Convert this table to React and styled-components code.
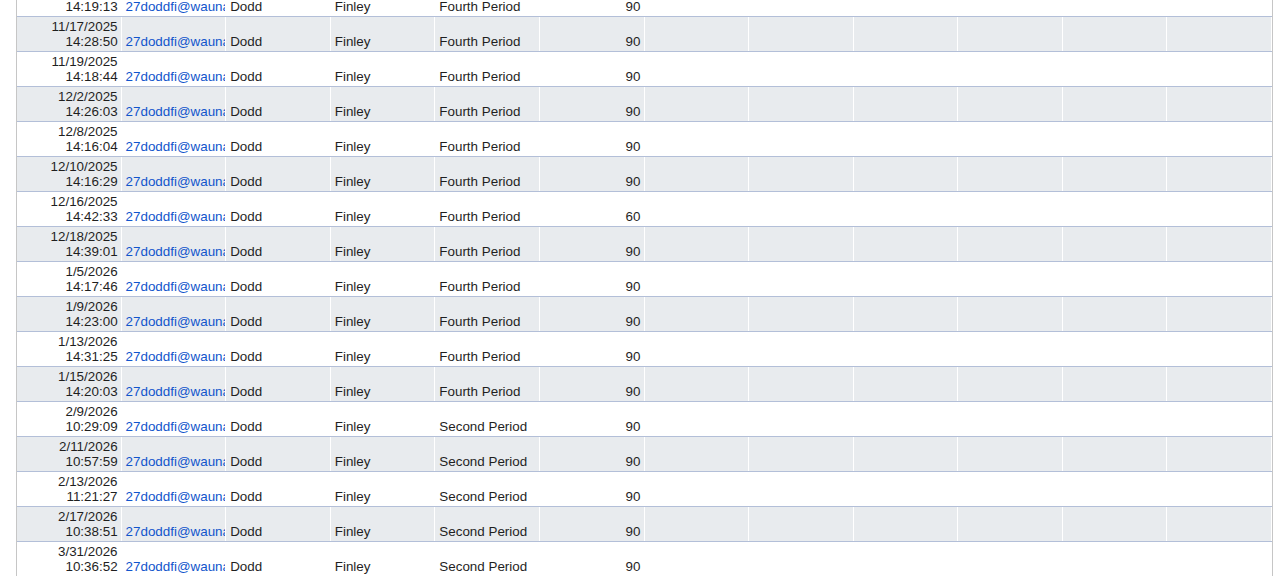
import styled, { createGlobalStyle } from 'styled-components';

const GlobalStyle = createGlobalStyle`
  body {
    margin: 0;
    background: #ffffff;
    font-family: "Liberation Sans", Arial, sans-serif;
    overflow: hidden;
  }
`;

const Page = styled.div`
  height: 576px;
  overflow: hidden;
`;

const Sheet = styled.div`
  margin-left: 16px;
  margin-top: -18px;
  width: 1255px;
  border-left: 1px solid #c6c6c6;
  border-right: 1px solid #c6c6c6;
  min-height: 620px;
`;

const Row = styled.div`
  display: grid;
  grid-template-columns: repeat(12, 1fr);
  height: 35px;
  box-sizing: border-box;
  border-bottom: 1px solid #b3bfd8;
  background: ${p => (p.$alt ? '#e8ebee' : '#ffffff')};
`;

const Cell = styled.div`
  display: flex;
  flex-direction: column;
  justify-content: flex-end;
  align-items: ${p => (p.$right ? 'flex-end' : 'flex-start')};
  padding: 0 3px 2px 4px;
  border-right: 1px solid #ffffff;
  overflow: hidden;
  white-space: nowrap;
  font-size: 13.4px;
  line-height: 15px;
  color: ${p => (p.$link ? '#1155cc' : '#1f1f1f')};
`;

const rows = [
  ['11/13/2025', '14:19:13', 'Fourth Period', '90'],
  ['11/17/2025', '14:28:50', 'Fourth Period', '90'],
  ['11/19/2025', '14:18:44', 'Fourth Period', '90'],
  ['12/2/2025', '14:26:03', 'Fourth Period', '90'],
  ['12/8/2025', '14:16:04', 'Fourth Period', '90'],
  ['12/10/2025', '14:16:29', 'Fourth Period', '90'],
  ['12/16/2025', '14:42:33', 'Fourth Period', '60'],
  ['12/18/2025', '14:39:01', 'Fourth Period', '90'],
  ['1/5/2026', '14:17:46', 'Fourth Period', '90'],
  ['1/9/2026', '14:23:00', 'Fourth Period', '90'],
  ['1/13/2026', '14:31:25', 'Fourth Period', '90'],
  ['1/15/2026', '14:20:03', 'Fourth Period', '90'],
  ['2/9/2026', '10:29:09', 'Second Period', '90'],
  ['2/11/2026', '10:57:59', 'Second Period', '90'],
  ['2/13/2026', '11:21:27', 'Second Period', '90'],
  ['2/17/2026', '10:38:51', 'Second Period', '90'],
  ['3/31/2026', '10:36:52', 'Second Period', '90'],
];

export default function App() {
  return (
    <Page>
      <GlobalStyle />
      <Sheet>
        {rows.map(([date, time, period, score], i) => (
          <Row key={i} $alt={i % 2 === 1}>
            <Cell $right>
              <span>{date}</span>
              <span>{time}</span>
            </Cell>
            <Cell $link>27doddfi@waunakeecsd.org</Cell>
            <Cell>Dodd</Cell>
            <Cell>Finley</Cell>
            <Cell>{period}</Cell>
            <Cell $right>{score}</Cell>
            {Array.from({ length: 6 }).map((_, j) => (
              <Cell key={j} />
            ))}
          </Row>
        ))}
      </Sheet>
    </Page>
  );
}
